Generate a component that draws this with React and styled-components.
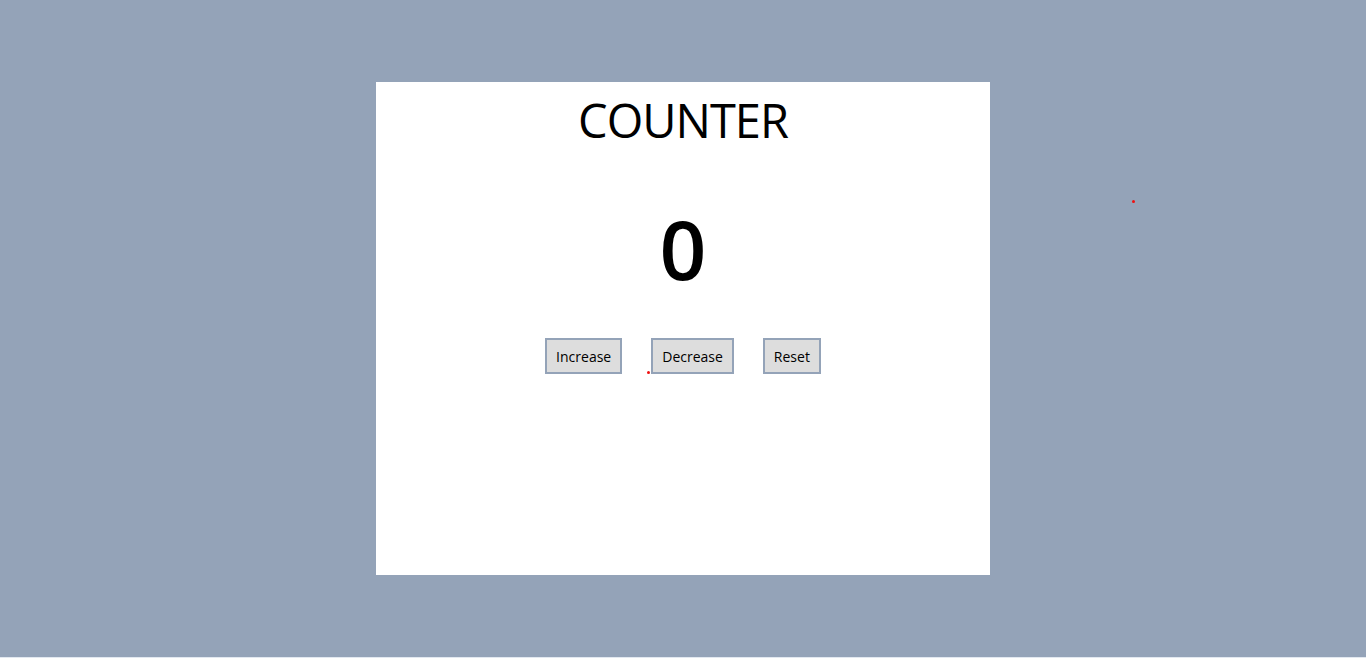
import React, { useState } from "react";
import styled, { createGlobalStyle } from "styled-components";

const Global = createGlobalStyle`
  html { background: #e2e8f0; }
  body {
    margin: 0;
    min-height: 657px;
    background: #94a3b8;
    font-family: "Open Sans", "Noto Sans", sans-serif;
  }
`;

const Page = styled.div`
  position: relative;
  display: flex;
  justify-content: center;
  padding-top: 82px;
`;

const Card = styled.main`
  width: 614px;
  height: 493px;
  background: #ffffff;
  display: flex;
  flex-direction: column;
  align-items: center;
`;

const Title = styled.h1`
  margin: 8px 0 0;
  font-size: 47px;
  font-weight: 400;
  line-height: 60px;
  color: #000;
  letter-spacing: -1px;
`;

const Count = styled.div`
  margin-top: 50px;
  font-size: 82px;
  font-weight: 600;
  line-height: 96px;
  color: #000;
`;

const Buttons = styled.div`
  margin-top: 42px;
  display: flex;
  gap: 29px;
`;

const Button = styled.button`
  height: 36px;
  padding: 0 9px;
  border: 2px solid #94a3b8;
  background: #dddddd;
  font-family: "Open Sans", "Noto Sans", sans-serif;
  font-size: 14px;
  color: #000;
  cursor: pointer;
`;

const Dot = styled.span`
  position: absolute;
  width: 3px;
  height: 3px;
  border-radius: 50%;
  background: #f01010;
  left: ${(p) => p.$x}px;
  top: ${(p) => p.$y}px;
`;

export default function App() {
  const [count, setCount] = useState(0);
  return (
    <>
      <Global />
      <Page>
        <Card>
          <Title>COUNTER</Title>
          <Count>{count}</Count>
          <Buttons>
            <Button onClick={() => setCount((c) => c + 1)}>Increase</Button>
            <Button onClick={() => setCount((c) => c - 1)}>Decrease</Button>
            <Button onClick={() => setCount(0)}>Reset</Button>
          </Buttons>
        </Card>
        <Dot $x={1132} $y={200} />
        <Dot $x={647} $y={371} />
      </Page>
    </>
  );
}
